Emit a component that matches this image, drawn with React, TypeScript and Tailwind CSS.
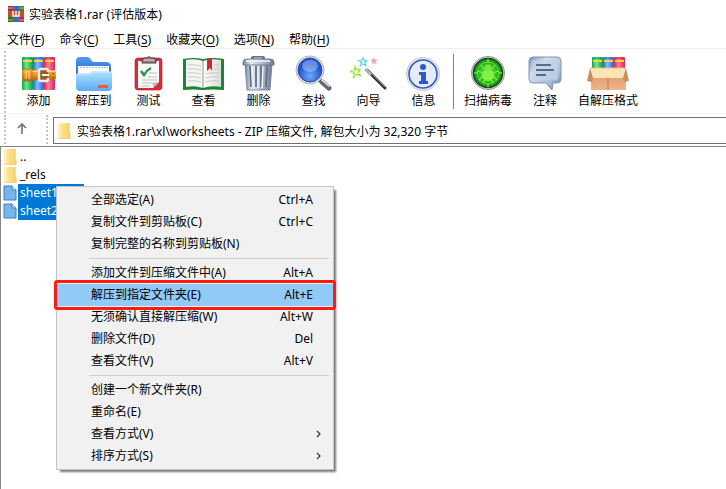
import type { ReactNode } from "react";

/* ---------- icons ---------- */

function Books({ x, y, h }: { x: number; y: number; h: number }) {
  return (
    <g transform={`translate(${x} ${y})`}>
      <rect x="0" y="0" width="11" height={h} rx="1" fill="url(#bookGreen)" />
      <rect x="11" y="0" width="11" height={h} rx="1" fill="url(#bookBlue)" />
      <rect x="22" y="0" width="11" height={h} rx="1" fill="url(#bookRed)" />
      <path d="M1 1h9" stroke="#1c9c42" strokeWidth="1" />
      <path d="M12 1h9" stroke="#2f62c8" strokeWidth="1" />
      <path d="M23 1h9" stroke="#d02a50" strokeWidth="1" />
      <rect x="1" y="3" width="9" height="2" fill="#fbd23c" />
      <rect x="12" y="3" width="9" height="2" fill="#fbd23c" />
      <rect x="23" y="3" width="9" height="2" fill="#fbd23c" />
    </g>
  );
}

function Gradients() {
  return (
    <svg width="0" height="0" className="absolute" aria-hidden="true">
      <defs>
        <linearGradient id="bookGreen"><stop offset="0" stopColor="#10a23e" /><stop offset=".4" stopColor="#6ee890" /><stop offset="1" stopColor="#129a42" /></linearGradient>
        <linearGradient id="bookBlue"><stop offset="0" stopColor="#2a66dc" /><stop offset=".4" stopColor="#86b8ff" /><stop offset="1" stopColor="#2a62d8" /></linearGradient>
        <linearGradient id="bookRed"><stop offset="0" stopColor="#e42448" /><stop offset=".4" stopColor="#ff7c94" /><stop offset="1" stopColor="#d8245a" /></linearGradient>
        <linearGradient id="belt" x2="0" y2="1"><stop offset="0" stopColor="#f9b646" /><stop offset=".5" stopColor="#ea9424" /><stop offset="1" stopColor="#b86a14" /></linearGradient>
        <linearGradient id="folderFront" x2="0" y2="1"><stop offset="0" stopColor="#b4e2ff" /><stop offset="1" stopColor="#58acf4" /></linearGradient>
        <linearGradient id="folderBack" x2="0" y2="1"><stop offset="0" stopColor="#4f9af2" /><stop offset="1" stopColor="#2767cf" /></linearGradient>
        <linearGradient id="steel"><stop offset="0" stopColor="#75859a" /><stop offset=".25" stopColor="#e2e9f0" /><stop offset=".6" stopColor="#b3bfcc" /><stop offset="1" stopColor="#6d7c90" /></linearGradient>
        <linearGradient id="page"><stop offset="0" stopColor="#ffffff" /><stop offset="1" stopColor="#dcdcd8" /></linearGradient>
        <linearGradient id="bubble" x2="1" y2="1"><stop offset="0" stopColor="#7792b8" /><stop offset=".3" stopColor="#d4e0ee" /><stop offset=".7" stopColor="#a8bdd8" /><stop offset="1" stopColor="#5878a4" /></linearGradient>
        <linearGradient id="yellowFolder"><stop offset="0" stopColor="#ffe9a0" /><stop offset="1" stopColor="#f8d468" /></linearGradient>
        <radialGradient id="lens" cy=".75"><stop offset="0" stopColor="#6ca8fc" /><stop offset="1" stopColor="#2454cc" /></radialGradient>
        <radialGradient id="scan"><stop offset="0" stopColor="#5be82c" /><stop offset=".6" stopColor="#30c01c" /><stop offset="1" stopColor="#138a10" /></radialGradient>
        <linearGradient id="carton" x2="0" y2="1"><stop offset="0" stopColor="#e09c70" /><stop offset="1" stopColor="#f0b48a" /></linearGradient>
      </defs>
    </svg>
  );
}

function Icon({ children, wide }: { children: ReactNode; wide?: boolean }) {
  return (
    <svg viewBox={wide ? "0 0 44 38" : "0 0 38 38"} className={wide ? "h-[38px] w-[44px]" : "h-[38px] w-[38px]"} aria-hidden="true">
      {children}
    </svg>
  );
}

const AddIcon = () => (
  <Icon>
    <Books x={2} y={3} h={33} />
    <rect x="2" y="16" width="34" height="10" rx="2" fill="url(#belt)" />
    <rect x="2" y="17" width="34" height="1" fill="#ffd57c" />
    <path d="M3 15h9v12H3z" fill="url(#belt)" stroke="#b06a1c" strokeWidth=".7" />
    <path d="M6 17v8M9 17v8" stroke="#ffe09a" />
    <path d="M28 15h-7q-2 0-2 2v8q0 2 2 2h7M28 15v3M28 24v3" fill="#9a5c22" stroke="#ececee" strokeWidth="2.4" />
    <path d="M22 21h7" stroke="#f0f0f0" strokeWidth="2" />
    <path d="M33 19v1M33 23v1" stroke="#683e12" strokeWidth="1.5" />
  </Icon>
);

const ExtractIcon = () => (
  <Icon>
    <path d="M1 20V7q0-4 4-4h7q3 0 4 3l2 2h13q5 0 5 5v9H1z" fill="url(#folderBack)" />
    <path d="M3 12h31v10H3z" fill="#fff" />
    <path d="M5 13.500h28" stroke="#b9bcc4" strokeDasharray="2 1" />
    <path d="M1 21q0-2 3-2h10l4-2h15q3 0 4 2v14q0 4-4 4H5q-4 0-4-4z" fill="url(#folderFront)" />
    <path d="M2 20h13l4-2h16" stroke="#dff4ff" fill="none" />
    <path d="M23 31h10v3H23z" fill="#ee5a34" />
  </Icon>
);

const TestIcon = () => (
  <Icon>
    <rect x="5" y="4" width="27" height="32" rx="3" fill="#dc2c3a" stroke="#b41a28" strokeWidth=".6" />
    <path d="M8 7h21v21l-6 6H8z" fill="#f8f8f6" />
    <path d="M23 34v-5l6-1z" fill="#bdbdb8" />
    <path d="M12 9V6q0-2 3-2h2q2-3 4 0h2q3 0 3 2v3z" fill="#a08088" stroke="#4c3c42" />
    <path d="M14 6h10" stroke="#ecdce0" />
    <path d="M19 19h8M18 23h9M12 26h15M12 29h11M12 32h8" stroke="#c0c1c4" />
    <path d="M11 17l3 4q3-5 7-7" fill="none" stroke="#259247" strokeWidth="2.4" />
  </Icon>
);

const ViewIcon = () => (
  <Icon wide>
    <path d="M1 5q12-2 20 0 10-2 21 0v31q-12-1-20 0h-2q-8-1-19 0z" fill="#1d8636" />
    <path d="M4 6q10-2 17 1v27q-8-3-17-1z" fill="#f5f5f3" />
    <path d="M21 7q8-3 18-1v27q-10-2-18 1z" fill="url(#page)" />
    <path d="M21 7v27" stroke="#969692" />
    <path d="M6 11q8-1 13 1M6 15q8-1 13 1M6 19q8-1 13 1M6 23q8-1 13 1M6 27q8-1 13 1M23 20q7-2 14-1M23 24q7-2 14-1M23 28q7-2 14-1M32 11h5M32 15h5" fill="none" stroke="#c4c4c4" strokeWidth=".9" />
    <path d="M25 5l5-1v13l-2-3-3 3z" fill="#cc2a30" />
  </Icon>
);

const DeleteIcon = () => (
  <Icon>
    <path d="M5 10h27l-2 26H7z" fill="url(#steel)" stroke="#697990" strokeWidth=".8" />
    <path d="M10 12l1 21M16 12v21M21 12v21M27 12l-1 21" stroke="#5f6e84" strokeWidth="1.7" />
    <path d="M12 12l1 22M18 12v22M23 12l-1 22" stroke="#edf3f8" strokeWidth="1.4" />
    <path d="M11 4q0-2 2-2h10q2 0 2 2v2H11z" fill="#60708a" />
    <path d="M14 4h8" stroke="#e8edf3" />
    <path d="M3 11V8q0-3 4-3h23q4 0 4 3v3z" fill="url(#steel)" stroke="#62728a" strokeWidth=".8" />
    <path d="M6 7h24" stroke="#f2f6fa" strokeWidth="1.5" />
  </Icon>
);

const FindIcon = () => (
  <Icon>
    <path d="M26 27l8 7" stroke="#62666c" strokeWidth="5" strokeLinecap="round" />
    <path d="M27 26l7 6" stroke="#d0d4d8" strokeWidth="2" strokeLinecap="round" />
    <circle cx="15" cy="16" r="14" fill="#e4e7eb" stroke="#a9b1bc" />
    <circle cx="15" cy="16" r="12" fill="url(#lens)" stroke="#2b4c9c" />
    <ellipse cx="15" cy="12" rx="8" ry="6" fill="#bdd3ff" opacity=".45" />
  </Icon>
);

const star = "M0-5L1.500-1.800 5-1.500 2.300.8 3.200 4.400 0 2.500-3.200 4.400-2.300.8-5-1.500-1.500-1.800z";

const WizardIcon = () => (
  <Icon>
    <path d="M17 16L35 34" stroke="#343434" strokeWidth="3" strokeLinecap="round" />
    <path d="M17 15L35 33" stroke="#8c8c8c" strokeWidth="1" />
    <path d="M16 16l4 4" stroke="#b4b4b6" strokeWidth="3" strokeLinecap="round" />
    <path d={star} transform="translate(6 18) rotate(-12)" fill="#f4ffe2" stroke="#9ce238" strokeWidth="1.8" strokeDasharray="3 1" />
    <path d={star} transform="translate(13 8) scale(.8)" fill="#e8fdff" stroke="#4cd2ee" strokeWidth="1.800" strokeDasharray="3 1" />
    <path d={star} transform="translate(24 7) scale(.7)" fill="#f79a9a" stroke="#f9c4c4" />
  </Icon>
);

const InfoIcon = () => (
  <Icon>
    <circle cx="18" cy="20" r="16.500" fill="#e4e6ee" stroke="#c8ccd6" />
    <circle cx="18" cy="20" r="14" fill="#e6ebf8" stroke="#345dc1" strokeWidth="1.6" />
    <circle cx="18" cy="13" r="3" fill="#2c59c9" />
    <path d="M14 18h7v9h2v3h-9v-3h2v-6h-2z" fill="#2c59c9" />
  </Icon>
);

const ScanIcon = () => (
  <Icon>
    <circle cx="19" cy="19" r="16.500" fill="#d6d2dc" stroke="#9a96a0" />
    <circle cx="19" cy="19" r="14.500" fill="url(#scan)" stroke="#17471a" strokeWidth="1.6" />
    <circle cx="19" cy="19" r="11" fill="none" stroke="#72e850" strokeWidth=".7" />
    <path d="M12 11l3 4M26 11l-3 4M9 17l5 2M29 17l-5 2M10 26l4-4M28 26l-4-4M14 29l2-4M24 29l-2-4" stroke="#88f050" strokeWidth="1.2" />
    <ellipse cx="19" cy="21" rx="6" ry="6" fill="#86f248" />
    <circle cx="19" cy="14" r="3.500" fill="#78e840" />
    <path d="M19 5v4M19 30v3M5 19h4M30 19h3" stroke="#9cff70" />
  </Icon>
);

const CommentIcon = () => (
  <Icon>
    <path d="M7 3h24q4 0 4 4v18q0 4-4 4h-4l-1 7-6-7H7q-4 0-4-4V7q0-4 4-4z" fill="url(#bubble)" stroke="#7b96ba" />
    <rect x="6" y="6" width="26" height="20" rx="2" fill="#c3d3e8" opacity=".7" />
    <path d="M10 11h15M10 16h18M10 21h10" stroke="#364963" strokeWidth="1.6" />
  </Icon>
);

const SfxIcon = () => (
  <Icon wide>
    <Books x={6} y={3} h={14} />
    <path d="M5 20h35v16H5z" fill="url(#carton)" />
    <path d="M22 24v12" stroke="#c27c54" />
    <path d="M4 14h36l-2 10H6z" fill="#fae6b4" />
    <path d="M4 14L1 27l5 1 1-4zM40 14l3 13-5 1-1-4z" fill="#d08a62" />
    <path d="M4 14h36" stroke="#e8bc84" />
  </Icon>
);

const AppIcon = () => (
  <svg viewBox="0 0 16 16" className="h-4 w-4" aria-hidden="true">
    <path d="M0 0h5v16H0z" fill="#a82c60" />
    <path d="M5 0h6v16H5z" fill="#3d65c6" />
    <path d="M11 0h5v16h-5z" fill="#2c8a36" />
    <path d="M0 9h5v7H0z" fill="#29752e" />
    <path d="M11 10h5v6h-5z" fill="#ad2b57" />
    <path d="M0 5h16v6H0z" fill="#c2521d" />
    <path d="M0 2h5M11 2h5M0 14h5M11 14h5" stroke="#e9ad37" />
    <path d="M5 5v5h6V5M8 5v5" fill="none" stroke="#fff4e5" strokeWidth="1.500" />
  </svg>
);

const FolderIcon = () => (
  <svg viewBox="0 0 14 16" className="h-4 w-[14px] shrink-0" aria-hidden="true">
    <path d="M1 0h11v10h1v6H1z" fill="url(#yellowFolder)" />
    <path d="M1 0h3v16H1z" fill="#ffeeb2" />
    <path d="M12 0v10h1v6H1" fill="none" stroke="#e8c868" />
  </svg>
);

const FileIcon = () => (
  <svg viewBox="0 0 14 16" className="h-4 w-[14px] shrink-0" aria-hidden="true">
    <path d="M1 1h8l4 4v10H1z" fill="#78b6ea" stroke="#397fc0" />
    <path d="M9 1v4h4" fill="#d4eafb" stroke="#397fc0" />
  </svg>
);

/* ---------- data ---------- */

const menus = [
  ["文件", "F"],
  ["命令", "C"],
  ["工具", "S"],
  ["收藏夹", "O"],
  ["选项", "N"],
  ["帮助", "H"],
];

const mainTools = [
  { label: "添加", icon: AddIcon },
  { label: "解压到", icon: ExtractIcon },
  { label: "测试", icon: TestIcon },
  { label: "查看", icon: ViewIcon },
  { label: "删除", icon: DeleteIcon },
  { label: "查找", icon: FindIcon },
  { label: "向导", icon: WizardIcon },
  { label: "信息", icon: InfoIcon },
];

const extraTools = [
  { label: "扫描病毒", icon: ScanIcon },
  { label: "注释", icon: CommentIcon },
  { label: "自解压格式", icon: SfxIcon },
];

const files = [
  { name: "..", folder: true },
  { name: "_rels", folder: true },
  { name: "sheet1.xml", folder: false },
  { name: "sheet2.xml", folder: false },
];

type Entry = { label: string; keys?: string; sub?: boolean; active?: boolean };

const contextGroups: Entry[][] = [
  [
    { label: "全部选定(A)", keys: "Ctrl+A" },
    { label: "复制文件到剪贴板(C)", keys: "Ctrl+C" },
    { label: "复制完整的名称到剪贴板(N)" },
  ],
  [
    { label: "添加文件到压缩文件中(A)", keys: "Alt+A" },
    { label: "解压到指定文件夹(E)", keys: "Alt+E", active: true },
    { label: "无须确认直接解压缩(W)", keys: "Alt+W" },
    { label: "删除文件(D)", keys: "Del" },
    { label: "查看文件(V)", keys: "Alt+V" },
  ],
  [
    { label: "创建一个新文件夹(R)" },
    { label: "重命名(E)" },
    { label: "查看方式(V)", sub: true },
    { label: "排序方式(S)", sub: true },
  ],
];

/* ---------- parts ---------- */

function ToolButton({ label, icon: Glyph, width }: { label: string; icon: () => ReactNode; width: string }) {
  return (
    <button type="button" className={`flex shrink-0 flex-col items-center ${width}`}>
      <Glyph />
      <span className="leading-[18px] whitespace-nowrap">{label}</span>
    </button>
  );
}

function ContextMenu() {
  return (
    <div role="menu" className="absolute top-[186px] left-14 w-[278px] border border-[#c4c4c4] bg-[#f1f1f1] py-[2px] shadow-[3px_3px_2px_-1px_#777]">
      {contextGroups.map((group, g) => (
        <div key={g} role="group" className={g > 0 ? "before:my-[3px] before:mr-1 before:ml-8 before:block before:h-px before:bg-[#cfcfcf]" : ""}>
          {group.map((item) => (
            <div key={item.label} className="relative">
              <button
                type="button"
                role="menuitem"
                className={`flex h-[22px] w-full items-center pl-[34px] text-left ${item.sub ? "pr-[10px]" : "pr-5"} ${item.active ? "bg-[#91c9f7]" : ""}`}
              >
                <span className="grow whitespace-nowrap">{item.label}</span>
                {item.keys && <span>{item.keys}</span>}
                {item.sub && (
                  <svg viewBox="0 0 8 8" className="h-2 w-2" aria-hidden="true">
                    <path d="M2 1l3 3-3 3" fill="none" stroke="#333" strokeWidth="1.2" />
                  </svg>
                )}
              </button>
              {item.active && <div className="pointer-events-none absolute -inset-x-[3px] -inset-y-1 z-10 rounded-[3px] border-3 border-[#fb1c14]" />}
            </div>
          ))}
        </div>
      ))}
    </div>
  );
}

export default function App() {
  return (
    <div className="relative flex min-h-screen flex-col overflow-hidden bg-white font-['Noto_Sans','Noto_Sans_CJK_SC',sans-serif] text-xs text-black">
      <Gradients />
      <header className="flex h-7 items-center gap-[5px] pl-2">
        <AppIcon />
        <h1 className="pt-px">实验表格1.rar (评估版本)</h1>
      </header>
      <nav className="flex h-[21px] items-end gap-[15px] border-b border-[#efefef] pl-[7px]">
        {menus.map(([text, key]) => (
          <button key={key} type="button" className="whitespace-nowrap">
            {text}(<u className="underline-offset-2">{key}</u>)
          </button>
        ))}
      </nav>

      <div className="flex h-[65px] items-start border-b border-[#f3f3f3] pt-[5px] pl-1">
        <div className="-mt-[3px] mr-[5px] h-[62px] border-l-2 border-dotted border-[#c4c4c4]" />
        {mainTools.map((t) => (
          <ToolButton key={t.label} {...t} width="w-[55px]" />
        ))}
        <div className="mr-1 ml-[2px] h-[55px] w-px bg-[#858585]" />
        {extraTools.map((t, i) => (
          <ToolButton key={t.label} {...t} width={["w-[60px]", "w-[54px]", "w-[72px]"][i]} />
        ))}
      </div>

      <div className="flex h-8 pt-[3px] pl-1">
        <div className="-mt-[2px] h-[29px] border-l-2 border-dotted border-[#c4c4c4]" />
        <button type="button" aria-label="向上" className="flex h-[23px] w-8 items-center justify-center">
          <svg viewBox="0 0 12 12" className="h-3 w-3" aria-hidden="true">
            <path d="M6 11V1M2 5l4-4 4 4" fill="none" stroke="#707070" strokeWidth="1.6" />
          </svg>
        </button>
        <div className="-mt-[2px] mr-[5px] ml-2 h-[29px] border-l-2 border-dotted border-[#c4c4c4]" />
        <label className="flex h-[27px] grow items-center gap-[6px] border border-r-0 border-[#707070] pl-[3px]">
          <FolderIcon />
          <input
            readOnly
            aria-label="路径"
            value="实验表格1.rar\xl\worksheets - ZIP 压缩文件, 解包大小为 32,320 字节"
            className="h-5 grow outline-none"
          />
        </label>
      </div>

      <main className="grow border-t border-l border-[#858585] pt-px">
        <ul>
          {files.map((f) => (
            <li key={f.name}>
              <button type="button" className="flex h-[18px] items-center gap-[1px] pl-[2px]">
                {f.folder ? <FolderIcon /> : <FileIcon />}
                <span className={`h-[18px] pl-[2px] text-left leading-[18px] ${f.folder ? "" : "w-[66px] bg-[#0078d7] text-white"}`}>
                  {f.name}
                </span>
              </button>
            </li>
          ))}
        </ul>
      </main>

      <ContextMenu />
    </div>
  );
}
